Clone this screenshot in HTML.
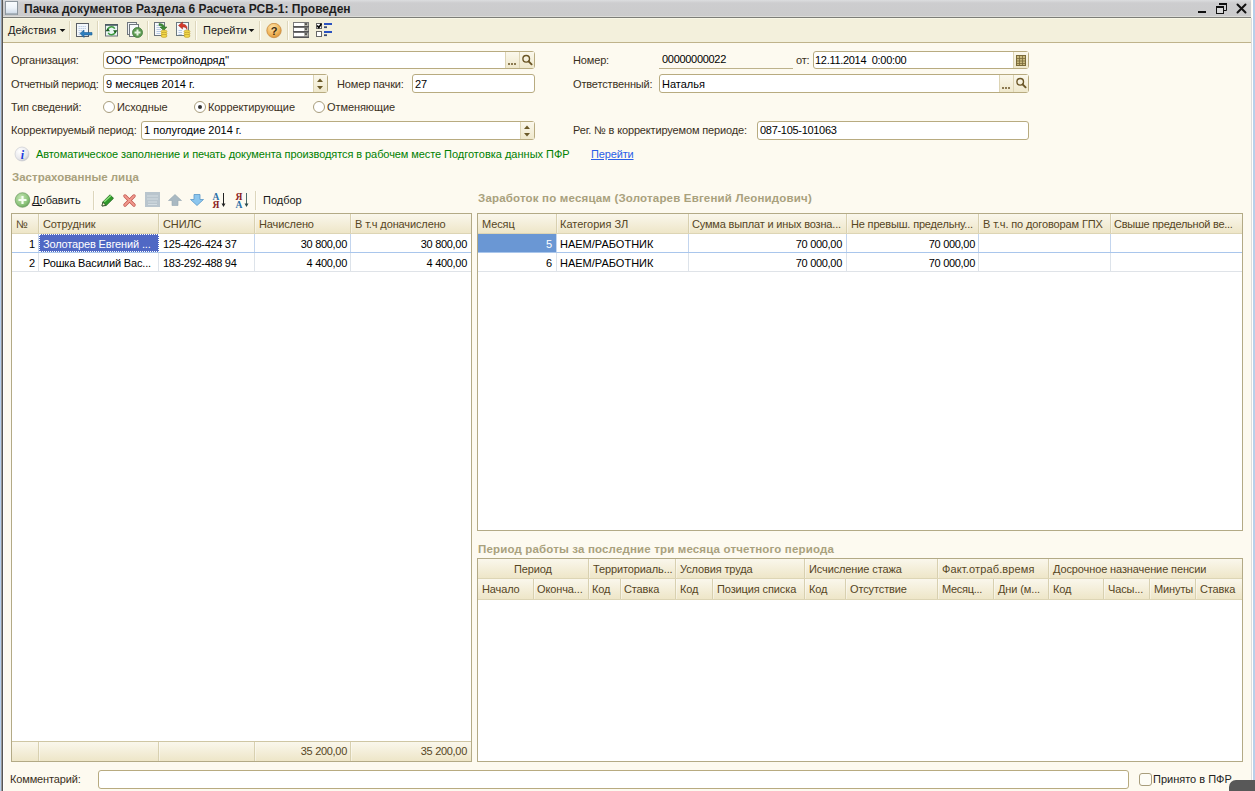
<!DOCTYPE html>
<html><head><meta charset="utf-8"><style>
*{box-sizing:border-box;margin:0;padding:0}
html,body{width:1255px;height:791px;overflow:hidden;background:#fdfaf0;font-family:"Liberation Sans",sans-serif;font-size:11px;color:#000}
.a{position:absolute}
.t{position:absolute;white-space:nowrap;line-height:13px}
.r{text-align:right}
.lbl{color:#3a301c;letter-spacing:-0.15px}
.inp{position:absolute;background:#fff;border:1px solid #b8ab80;border-radius:3px;overflow:hidden}
.sect{color:#a9a17d;font-weight:bold}
.hx{color:#56461f;letter-spacing:-0.12px}
.n{letter-spacing:-0.3px}
.hdr{position:absolute;background:linear-gradient(#faf7ec,#eee6c8)}
</style></head><body>
<div class="a" style="left:0px;top:0px;width:1px;height:791px;background:#b6d0ee"></div>
<div class="a" style="left:1px;top:0px;width:1px;height:791px;background:#9a9a9a"></div>
<div class="a" style="left:2px;top:0px;width:1px;height:791px;background:#555"></div>
<div class="a" style="left:3px;top:18px;width:1px;height:773px;background:#fff"></div>
<div class="a" style="left:1251px;top:18px;width:1px;height:773px;background:#dcdcdc"></div>
<div class="a" style="left:1252px;top:0px;width:1px;height:791px;background:#fff"></div>
<div class="a" style="left:1253px;top:0px;width:2px;height:791px;background:#b8d0ea"></div>
<div class="a" style="left:3px;top:0px;width:1248px;height:16px;background:linear-gradient(#dcdddf,#cdcdcf 3px,#cbcbcc)"></div>
<div class="a" style="left:3px;top:16px;width:1248px;height:1px;background:#dcdcd9"></div>
<div class="a" style="left:3px;top:17px;width:1248px;height:1px;background:#7c7d77"></div>
<div class="a" style="left:3px;top:18px;width:1248px;height:24px;background:#f3f0dc"></div>
<div class="a" style="left:3px;top:18px;width:1248px;height:1px;background:#f9f7e6"></div>
<div class="a" style="left:3px;top:42px;width:1248px;height:1px;background:#bfb38b"></div>
<div class="t " style="left:24px;top:3px;font-weight:bold;font-size:12px;letter-spacing:0;color:#1e1e1e">Пачка документов Раздела 6 Расчета РСВ-1: Проведен</div>
<div class="t " style="left:8px;top:24px;color:#1a1a1a">Действия</div>
<div class="t " style="left:203px;top:24px;color:#1a1a1a">Перейти</div>
<div class="t lbl" style="left:11px;top:54px;">Организация:</div>
<div class="t lbl" style="left:11px;top:78px;"><span style="letter-spacing:-0.35px">Отчетный период:</span></div>
<div class="t lbl" style="left:11px;top:101px;">Тип сведений:</div>
<div class="t lbl" style="left:11px;top:124px;">Корректируемый период:</div>
<div class="t lbl" style="left:337px;top:78px;">Номер пачки:</div>
<div class="t lbl" style="left:573px;top:54px;">Номер:</div>
<div class="t lbl" style="left:573px;top:78px;">Ответственный:</div>
<div class="t lbl" style="left:573px;top:124px;">Рег. № в корректируемом периоде:</div>
<div class="t lbl" style="left:796px;top:54px;">от:</div>
<div class="inp" style="left:103px;top:51px;width:432px;height:18px"></div>
<div class="inp" style="left:103px;top:74px;width:225px;height:19px"></div>
<div class="inp" style="left:412px;top:74px;width:123px;height:19px"></div>
<div class="inp" style="left:141px;top:121px;width:394px;height:19px"></div>
<div class="inp" style="left:813px;top:51px;width:216px;height:18px"></div>
<div class="inp" style="left:659px;top:74px;width:370px;height:19px"></div>
<div class="inp" style="left:757px;top:121px;width:272px;height:19px"></div>
<div class="a" style="left:659px;top:68px;width:134px;height:1px;background:#bdb28c"></div>
<div class="t " style="left:106px;top:54px;">ООО ''Ремстройподряд''</div>
<div class="t " style="left:106px;top:78px;">9 месяцев 2014 г.</div>
<div class="t " style="left:415px;top:78px;">27</div>
<div class="t " style="left:144px;top:124px;">1 полугодие 2014 г.</div>
<div class="t n" style="left:662px;top:53px;">00000000022</div>
<div class="t n" style="left:815px;top:54px;">12.11.2014&nbsp;&nbsp;0:00:00</div>
<div class="t " style="left:662px;top:78px;">Наталья</div>
<div class="t n" style="left:760px;top:124px;">087-105-101063</div>
<div class="a" style="left:103px;top:101px;width:12px;height:12px;border:1px solid #a89d7c;border-radius:50%;background:#fff"></div>
<div class="a" style="left:194px;top:101px;width:12px;height:12px;border:1px solid #a89d7c;border-radius:50%;background:#fff"></div>
<div class="a" style="left:313px;top:101px;width:12px;height:12px;border:1px solid #a89d7c;border-radius:50%;background:#fff"></div>
<div class="a" style="left:198px;top:105px;width:4px;height:4px;border-radius:50%;background:#333"></div>
<div class="t lbl" style="left:117px;top:101px;letter-spacing:-0.08px">Исходные</div>
<div class="t lbl" style="left:208px;top:101px;letter-spacing:-0.08px">Корректирующие</div>
<div class="t lbl" style="left:327px;top:101px;letter-spacing:-0.08px">Отменяющие</div>
<div class="t " style="left:36px;top:148px;color:#008000;letter-spacing:-0.08px">Автоматическое заполнение и печать документа производятся в рабочем месте</div>
<div class="t " style="left:444px;top:148px;color:#008000">Подготовка данных ПФР</div>
<div class="t " style="left:591px;top:148px;color:#2a5ee8;text-decoration:underline;letter-spacing:-0.15px">Перейти</div>
<div class="t sect" style="left:12px;top:171px;font-size:11.5px">Застрахованные лица</div>
<div class="t sect" style="left:478px;top:192px;font-size:11.5px;letter-spacing:0.18px">Заработок по месяцам (Золотарев Евгений Леонидович)</div>
<div class="t sect" style="left:478px;top:543px;font-size:11.5px;letter-spacing:0.16px">Период работы за последние три месяца отчетного периода</div>
<div class="t " style="left:32px;top:194px;color:#1a1a1a">Добавить</div>
<div class="t " style="left:263px;top:194px;color:#1a1a1a">Подбор</div>
<div class="a" style="left:11px;top:213px;width:461px;height:549px;background:#fff;border:1px solid #b3aa86"></div>
<div class="hdr" style="left:12px;top:214px;width:459px;height:19px"></div>
<div class="a" style="left:12px;top:233px;width:459px;height:1px;background:#ddd5b5"></div>
<div class="a" style="left:38px;top:214px;width:1px;height:19px;background:#d8d0b0"></div>
<div class="a" style="left:39px;top:214px;width:1px;height:19px;background:rgba(255,255,255,0.4)"></div>
<div class="a" style="left:158px;top:214px;width:1px;height:19px;background:#d8d0b0"></div>
<div class="a" style="left:159px;top:214px;width:1px;height:19px;background:rgba(255,255,255,0.4)"></div>
<div class="a" style="left:254px;top:214px;width:1px;height:19px;background:#d8d0b0"></div>
<div class="a" style="left:255px;top:214px;width:1px;height:19px;background:rgba(255,255,255,0.4)"></div>
<div class="a" style="left:350px;top:214px;width:1px;height:19px;background:#d8d0b0"></div>
<div class="a" style="left:351px;top:214px;width:1px;height:19px;background:rgba(255,255,255,0.4)"></div>
<div class="a" style="left:12px;top:252px;width:459px;height:1px;background:#a9c6ec"></div>
<div class="a" style="left:12px;top:271px;width:459px;height:1px;background:#dfe3e8"></div>
<div class="a" style="left:38px;top:234px;width:1px;height:18px;background:#c3d5ee"></div>
<div class="a" style="left:38px;top:253px;width:1px;height:18px;background:#dde3ea"></div>
<div class="a" style="left:158px;top:234px;width:1px;height:18px;background:#c3d5ee"></div>
<div class="a" style="left:158px;top:253px;width:1px;height:18px;background:#dde3ea"></div>
<div class="a" style="left:254px;top:234px;width:1px;height:18px;background:#c3d5ee"></div>
<div class="a" style="left:254px;top:253px;width:1px;height:18px;background:#dde3ea"></div>
<div class="a" style="left:350px;top:234px;width:1px;height:18px;background:#c3d5ee"></div>
<div class="a" style="left:350px;top:253px;width:1px;height:18px;background:#dde3ea"></div>
<div class="a" style="left:39px;top:234px;width:120px;height:18px;background:#5068c4;border:1px dotted #fff"></div>
<div class="hdr" style="left:12px;top:742px;width:459px;height:19px"></div>
<div class="a" style="left:12px;top:741px;width:459px;height:1px;background:#cfc6a4"></div>
<div class="a" style="left:38px;top:742px;width:1px;height:19px;background:#d8d0b0"></div>
<div class="a" style="left:39px;top:742px;width:1px;height:19px;background:rgba(255,255,255,0.4)"></div>
<div class="a" style="left:158px;top:742px;width:1px;height:19px;background:#d8d0b0"></div>
<div class="a" style="left:159px;top:742px;width:1px;height:19px;background:rgba(255,255,255,0.4)"></div>
<div class="a" style="left:254px;top:742px;width:1px;height:19px;background:#d8d0b0"></div>
<div class="a" style="left:255px;top:742px;width:1px;height:19px;background:rgba(255,255,255,0.4)"></div>
<div class="a" style="left:350px;top:742px;width:1px;height:19px;background:#d8d0b0"></div>
<div class="a" style="left:351px;top:742px;width:1px;height:19px;background:rgba(255,255,255,0.4)"></div>
<div class="t hx" style="left:16px;top:218px;">№</div>
<div class="t hx" style="left:43px;top:218px;">Сотрудник</div>
<div class="t hx" style="left:163px;top:218px;">СНИЛС</div>
<div class="t hx" style="left:259px;top:218px;">Начислено</div>
<div class="t hx" style="left:355px;top:218px;">В т.ч доначислено</div>
<div class="t " style="left:29px;top:238px;width:5px;text-align:right">1</div>
<div class="t " style="left:43px;top:238px;color:#fff;letter-spacing:-0.15px">Золотарев Евгений ...</div>
<div class="t " style="left:29px;top:257px;">2</div>
<div class="t " style="left:43px;top:257px;letter-spacing:-0.15px">Рошка Василий Вас...</div>
<div class="t n" style="left:163px;top:238px;">125-426-424 37</div>
<div class="t n" style="left:163px;top:257px;">183-292-488 94</div>
<div class="t r n" style="left:200px;top:238px;width:147px">30 800,00</div>
<div class="t r n" style="left:300px;top:238px;width:167px">30 800,00</div>
<div class="t r n" style="left:200px;top:257px;width:147px">4 400,00</div>
<div class="t r n" style="left:300px;top:257px;width:167px">4 400,00</div>
<div class="t r hx n" style="left:200px;top:745px;width:147px">35 200,00</div>
<div class="t r hx n" style="left:300px;top:745px;width:167px">35 200,00</div>
<div class="a" style="left:477px;top:213px;width:766px;height:318px;background:#fff;border:1px solid #b3aa86"></div>
<div class="hdr" style="left:478px;top:214px;width:764px;height:19px"></div>
<div class="a" style="left:478px;top:233px;width:764px;height:1px;background:#ddd5b5"></div>
<div class="a" style="left:556px;top:214px;width:1px;height:19px;background:#d8d0b0"></div>
<div class="a" style="left:557px;top:214px;width:1px;height:19px;background:rgba(255,255,255,0.4)"></div>
<div class="a" style="left:688px;top:214px;width:1px;height:19px;background:#d8d0b0"></div>
<div class="a" style="left:689px;top:214px;width:1px;height:19px;background:rgba(255,255,255,0.4)"></div>
<div class="a" style="left:846px;top:214px;width:1px;height:19px;background:#d8d0b0"></div>
<div class="a" style="left:847px;top:214px;width:1px;height:19px;background:rgba(255,255,255,0.4)"></div>
<div class="a" style="left:978px;top:214px;width:1px;height:19px;background:#d8d0b0"></div>
<div class="a" style="left:979px;top:214px;width:1px;height:19px;background:rgba(255,255,255,0.4)"></div>
<div class="a" style="left:1110px;top:214px;width:1px;height:19px;background:#d8d0b0"></div>
<div class="a" style="left:1111px;top:214px;width:1px;height:19px;background:rgba(255,255,255,0.4)"></div>
<div class="a" style="left:478px;top:252px;width:764px;height:1px;background:#a9c6ec"></div>
<div class="a" style="left:478px;top:271px;width:764px;height:1px;background:#dfe3e8"></div>
<div class="a" style="left:556px;top:234px;width:1px;height:18px;background:#c3d5ee"></div>
<div class="a" style="left:556px;top:253px;width:1px;height:18px;background:#dde3ea"></div>
<div class="a" style="left:688px;top:234px;width:1px;height:18px;background:#c3d5ee"></div>
<div class="a" style="left:688px;top:253px;width:1px;height:18px;background:#dde3ea"></div>
<div class="a" style="left:846px;top:234px;width:1px;height:18px;background:#c3d5ee"></div>
<div class="a" style="left:846px;top:253px;width:1px;height:18px;background:#dde3ea"></div>
<div class="a" style="left:978px;top:234px;width:1px;height:18px;background:#c3d5ee"></div>
<div class="a" style="left:978px;top:253px;width:1px;height:18px;background:#dde3ea"></div>
<div class="a" style="left:1110px;top:234px;width:1px;height:18px;background:#c3d5ee"></div>
<div class="a" style="left:1110px;top:253px;width:1px;height:18px;background:#dde3ea"></div>
<div class="a" style="left:478px;top:234px;width:78px;height:18px;background:#6a97d4"></div>
<div class="t hx" style="left:482px;top:218px;">Месяц</div>
<div class="t hx" style="left:560px;top:218px;"><span style="letter-spacing:0">Категория ЗЛ</span></div>
<div class="t hx" style="left:692px;top:218px;"><span style="letter-spacing:-0.17px">Сумма выплат и иных возна...</span></div>
<div class="t hx" style="left:851px;top:218px;"><span style="letter-spacing:-0.17px">Не превыш. предельну...</span></div>
<div class="t hx" style="left:983px;top:218px;">В т.ч. по договорам ГПХ</div>
<div class="t hx" style="left:1114px;top:218px;"><span style="letter-spacing:-0.26px">Свыше предельной ве...</span></div>
<div class="t r" style="left:480px;top:238px;width:72px;color:#fff">5</div>
<div class="t r" style="left:480px;top:257px;width:72px">6</div>
<div class="t " style="left:560px;top:238px;">НАЕМ/РАБОТНИК</div>
<div class="t " style="left:560px;top:257px;">НАЕМ/РАБОТНИК</div>
<div class="t r n" style="left:700px;top:238px;width:142px">70 000,00</div>
<div class="t r n" style="left:850px;top:238px;width:125px">70 000,00</div>
<div class="t r n" style="left:700px;top:257px;width:142px">70 000,00</div>
<div class="t r n" style="left:850px;top:257px;width:125px">70 000,00</div>
<div class="a" style="left:477px;top:558px;width:766px;height:204px;background:#fff;border:1px solid #b3aa86"></div>
<div class="hdr" style="left:478px;top:559px;width:764px;height:19px"></div>
<div class="a" style="left:478px;top:578px;width:764px;height:1px;background:#ddd5b5"></div>
<div class="hdr" style="left:478px;top:579px;width:764px;height:20px"></div>
<div class="a" style="left:478px;top:599px;width:764px;height:1px;background:#ddd5b5"></div>
<div class="a" style="left:588px;top:559px;width:1px;height:19px;background:#d8d0b0"></div>
<div class="a" style="left:589px;top:559px;width:1px;height:19px;background:rgba(255,255,255,0.4)"></div>
<div class="a" style="left:675px;top:559px;width:1px;height:19px;background:#d8d0b0"></div>
<div class="a" style="left:676px;top:559px;width:1px;height:19px;background:rgba(255,255,255,0.4)"></div>
<div class="a" style="left:804px;top:559px;width:1px;height:19px;background:#d8d0b0"></div>
<div class="a" style="left:805px;top:559px;width:1px;height:19px;background:rgba(255,255,255,0.4)"></div>
<div class="a" style="left:937px;top:559px;width:1px;height:19px;background:#d8d0b0"></div>
<div class="a" style="left:938px;top:559px;width:1px;height:19px;background:rgba(255,255,255,0.4)"></div>
<div class="a" style="left:1048px;top:559px;width:1px;height:19px;background:#d8d0b0"></div>
<div class="a" style="left:1049px;top:559px;width:1px;height:19px;background:rgba(255,255,255,0.4)"></div>
<div class="a" style="left:533px;top:579px;width:1px;height:20px;background:#d8d0b0"></div>
<div class="a" style="left:534px;top:579px;width:1px;height:20px;background:rgba(255,255,255,0.4)"></div>
<div class="a" style="left:588px;top:579px;width:1px;height:20px;background:#d8d0b0"></div>
<div class="a" style="left:589px;top:579px;width:1px;height:20px;background:rgba(255,255,255,0.4)"></div>
<div class="a" style="left:620px;top:579px;width:1px;height:20px;background:#d8d0b0"></div>
<div class="a" style="left:621px;top:579px;width:1px;height:20px;background:rgba(255,255,255,0.4)"></div>
<div class="a" style="left:675px;top:579px;width:1px;height:20px;background:#d8d0b0"></div>
<div class="a" style="left:676px;top:579px;width:1px;height:20px;background:rgba(255,255,255,0.4)"></div>
<div class="a" style="left:712px;top:579px;width:1px;height:20px;background:#d8d0b0"></div>
<div class="a" style="left:713px;top:579px;width:1px;height:20px;background:rgba(255,255,255,0.4)"></div>
<div class="a" style="left:804px;top:579px;width:1px;height:20px;background:#d8d0b0"></div>
<div class="a" style="left:805px;top:579px;width:1px;height:20px;background:rgba(255,255,255,0.4)"></div>
<div class="a" style="left:845px;top:579px;width:1px;height:20px;background:#d8d0b0"></div>
<div class="a" style="left:846px;top:579px;width:1px;height:20px;background:rgba(255,255,255,0.4)"></div>
<div class="a" style="left:937px;top:579px;width:1px;height:20px;background:#d8d0b0"></div>
<div class="a" style="left:938px;top:579px;width:1px;height:20px;background:rgba(255,255,255,0.4)"></div>
<div class="a" style="left:993px;top:579px;width:1px;height:20px;background:#d8d0b0"></div>
<div class="a" style="left:994px;top:579px;width:1px;height:20px;background:rgba(255,255,255,0.4)"></div>
<div class="a" style="left:1048px;top:579px;width:1px;height:20px;background:#d8d0b0"></div>
<div class="a" style="left:1049px;top:579px;width:1px;height:20px;background:rgba(255,255,255,0.4)"></div>
<div class="a" style="left:1103px;top:579px;width:1px;height:20px;background:#d8d0b0"></div>
<div class="a" style="left:1104px;top:579px;width:1px;height:20px;background:rgba(255,255,255,0.4)"></div>
<div class="a" style="left:1149px;top:579px;width:1px;height:20px;background:#d8d0b0"></div>
<div class="a" style="left:1150px;top:579px;width:1px;height:20px;background:rgba(255,255,255,0.4)"></div>
<div class="a" style="left:1195px;top:579px;width:1px;height:20px;background:#d8d0b0"></div>
<div class="a" style="left:1196px;top:579px;width:1px;height:20px;background:rgba(255,255,255,0.4)"></div>
<div class="t hx" style="left:478px;top:563px;width:110px;text-align:center">Период</div>
<div class="t hx" style="left:593px;top:563px;">Территориаль...</div>
<div class="t hx" style="left:680px;top:563px;">Условия труда</div>
<div class="t hx" style="left:809px;top:563px;">Исчисление стажа</div>
<div class="t hx" style="left:942px;top:563px;"><span style="letter-spacing:0.14px">Факт.отраб.время</span></div>
<div class="t hx" style="left:1053px;top:563px;">Досрочное назначение пенсии</div>
<div class="t hx" style="left:482px;top:583px;">Начало</div>
<div class="t hx" style="left:537px;top:583px;">Оконча...</div>
<div class="t hx" style="left:592px;top:583px;">Код</div>
<div class="t hx" style="left:624px;top:583px;">Ставка</div>
<div class="t hx" style="left:680px;top:583px;">Код</div>
<div class="t hx" style="left:717px;top:583px;">Позиция списка</div>
<div class="t hx" style="left:809px;top:583px;">Код</div>
<div class="t hx" style="left:850px;top:583px;">Отсутствие</div>
<div class="t hx" style="left:942px;top:583px;"><span style="letter-spacing:-0.3px">Месяц...</span></div>
<div class="t hx" style="left:998px;top:583px;">Дни (м...</div>
<div class="t hx" style="left:1053px;top:583px;">Код</div>
<div class="t hx" style="left:1108px;top:583px;">Часы...</div>
<div class="t hx" style="left:1154px;top:583px;">Минуты</div>
<div class="t hx" style="left:1200px;top:583px;">Ставка</div>
<svg class="a" style="left:5px;top:1px" width="13" height="14" viewBox="0 0 13 14"><defs><linearGradient id="tig" x1="0" y1="0" x2="0" y2="1"><stop offset="0" stop-color="#fbfdff"/><stop offset="0.5" stop-color="#eef3f9"/><stop offset="1" stop-color="#c9d6e4"/></linearGradient></defs><rect x="0.5" y="0.5" width="12" height="13" fill="url(#tig)" stroke="#8d969e"/><rect x="1" y="12" width="11" height="1.5" fill="#a9b3bc"/></svg>
<div class="a" style="left:1198px;top:11px;width:8px;height:2px;background:#111"></div>
<svg class="a" style="left:1216px;top:3px" width="11" height="11" viewBox="0 0 11 11"><path d="M3.5 2V0.5H10.5V7.5H8" fill="none" stroke="#111" stroke-width="1"/><rect x="3" y="0" width="8" height="2" fill="#111"/><rect x="0.5" y="3.5" width="7" height="7" fill="#d9d9d9" stroke="#111" stroke-width="1"/><rect x="0" y="3" width="8" height="2" fill="#111"/></svg>
<svg class="a" style="left:1236px;top:3px" width="11" height="11" viewBox="0 0 11 11"><path d="M1.5 1.5L9.5 9.5M9.5 1.5L1.5 9.5" stroke="#111" stroke-width="2" stroke-linecap="round"/></svg>
<div class="a" style="left:69px;top:21px;width:1px;height:19px;background:#ddd6bc"></div>
<div class="a" style="left:70px;top:21px;width:1px;height:19px;background:#fffdf6"></div>
<div class="a" style="left:97px;top:21px;width:1px;height:19px;background:#ddd6bc"></div>
<div class="a" style="left:98px;top:21px;width:1px;height:19px;background:#fffdf6"></div>
<div class="a" style="left:147px;top:21px;width:1px;height:19px;background:#ddd6bc"></div>
<div class="a" style="left:148px;top:21px;width:1px;height:19px;background:#fffdf6"></div>
<div class="a" style="left:195px;top:21px;width:1px;height:19px;background:#ddd6bc"></div>
<div class="a" style="left:196px;top:21px;width:1px;height:19px;background:#fffdf6"></div>
<div class="a" style="left:259px;top:21px;width:1px;height:19px;background:#ddd6bc"></div>
<div class="a" style="left:260px;top:21px;width:1px;height:19px;background:#fffdf6"></div>
<div class="a" style="left:287px;top:21px;width:1px;height:19px;background:#ddd6bc"></div>
<div class="a" style="left:288px;top:21px;width:1px;height:19px;background:#fffdf6"></div>
<svg class="a" style="left:59px;top:29px" width="7" height="3" viewBox="0 0 7 3"><path d="M0.6 0H6.4L3.5 3Z" fill="#111"/></svg>
<svg class="a" style="left:248px;top:29px" width="7" height="3" viewBox="0 0 7 3"><path d="M0.6 0H6.4L3.5 3Z" fill="#111"/></svg>
<svg class="a" style="left:75px;top:22px" width="18" height="16" viewBox="0 0 18 16"><rect x="1.5" y="1.5" width="12" height="13" fill="#f4f8fc" stroke="#5a5f66"/><path d="M3.5 4.5H11.5M3.5 6.5H11.5M3.5 8.5H9M3.5 10.5H6M3.5 12.5H5" stroke="#9db6d8" stroke-width="0.6" stroke-dasharray="1.5 0.5"/><path d="M5 11.5L9 8V10.5H17V13H9V15.5Z" fill="#2f7fbf" stroke="#1d5f96" stroke-width="0.6"/></svg>
<svg class="a" style="left:104px;top:23px" width="15" height="14" viewBox="0 0 15 14"><rect x="1.5" y="1.5" width="12" height="11.5" fill="#eaf6f4" stroke="#6a7176"/><rect x="1" y="1" width="13" height="1.8" fill="#4a5a62"/><path d="M3.6 7.5A3.9 3.9 0 0 1 10.8 5.6" stroke="#3d9a40" stroke-width="1.5" fill="none"/><path d="M11.4 8A3.9 3.9 0 0 1 4.2 9.9" stroke="#3d9a40" stroke-width="1.5" fill="none"/><path d="M1.4 8.2H6L3.7 5.2Z" fill="#1d5e20"/><path d="M13.6 7.3H9L11.3 10.3Z" fill="#1d5e20"/></svg>
<svg class="a" style="left:126px;top:21px" width="18" height="17" viewBox="0 0 18 17"><rect x="1.5" y="1.5" width="9" height="12" fill="#f0f3f6" stroke="#70777e"/><rect x="3.5" y="3.5" width="9" height="12" fill="#f7f9fb" stroke="#70777e"/><circle cx="11.5" cy="11.5" r="5" fill="#5c9a52" stroke="#3f7a3a" stroke-width="0.8"/><path d="M11.5 8.5V14.5M8.5 11.5H14.5" stroke="#e8f5e4" stroke-width="2"/></svg>
<svg class="a" style="left:153px;top:21px" width="17" height="17" viewBox="0 0 17 17"><rect x="1.5" y="1.5" width="10" height="13" fill="#f6f9fc" stroke="#6c747c"/><path d="M3.5 4.5H8M3.5 6.5H8M3.5 8.5H8M3.5 10.5H8M3.5 12.5H7" stroke="#9db6d8" stroke-width="0.7"/><path d="M6 2.5C9 2.5 11 3.5 11.5 6H14L10.5 9.5L7 6H9.2C8.8 4.8 7.8 4.5 6 4.5Z" fill="#3f8a35" stroke="#2a6a26" stroke-width="0.5"/><ellipse cx="11" cy="10.5" rx="3" ry="1.5" fill="#f2d84a" stroke="#b8982a" stroke-width="0.6"/><ellipse cx="11" cy="12.7" rx="3" ry="1.5" fill="#f2d84a" stroke="#b8982a" stroke-width="0.6"/><ellipse cx="11" cy="14.9" rx="3" ry="1.5" fill="#f2d84a" stroke="#b8982a" stroke-width="0.6"/></svg>
<svg class="a" style="left:175px;top:21px" width="17" height="17" viewBox="0 0 17 17"><rect x="1.5" y="1.5" width="12" height="13" fill="#f6f9fc" stroke="#6c7a80"/><path d="M3.5 9.5H7M3.5 11.5H7M3.5 13.5H7" stroke="#9db6d8" stroke-width="0.7"/><path d="M3.5 4.5L7.5 1V3.2C10.5 3.2 12.5 5 12 8.5C11.2 6.5 9.8 6 7.5 6V8Z" fill="#d43a2a" stroke="#9a2018" stroke-width="0.5"/><ellipse cx="12" cy="10.5" rx="3" ry="1.5" fill="#f2d84a" stroke="#b8982a" stroke-width="0.6"/><ellipse cx="12" cy="12.7" rx="3" ry="1.5" fill="#f2d84a" stroke="#b8982a" stroke-width="0.6"/><ellipse cx="12" cy="14.9" rx="3" ry="1.5" fill="#f2d84a" stroke="#b8982a" stroke-width="0.6"/></svg>
<svg class="a" style="left:266px;top:23px" width="16" height="16" viewBox="0 0 16 16"><defs><radialGradient id="hg" cx="0.4" cy="0.3" r="0.8"><stop offset="0" stop-color="#fde3a8"/><stop offset="0.6" stop-color="#f0b45a"/><stop offset="1" stop-color="#d38a2e"/></radialGradient></defs><circle cx="8" cy="7.5" r="7.2" fill="url(#hg)" stroke="#c78a40" stroke-width="0.8"/><text x="8" y="12" text-anchor="middle" font-family="Liberation Sans" font-weight="bold" font-size="11" fill="#3a2a12">?</text></svg>
<svg class="a" style="left:293px;top:22px" width="16" height="16" viewBox="0 0 16 16"><g fill="#fff" stroke="#7a7a7a"><rect x="0.5" y="0.5" width="15" height="4"/><rect x="0.5" y="5.5" width="15" height="4"/><rect x="0.5" y="10.5" width="15" height="4.5"/></g><g fill="#b8b8b0"><rect x="11" y="1" width="4" height="3"/><rect x="11" y="6" width="4" height="3"/><rect x="11" y="11" width="4" height="3.5"/></g><g fill="#111"><path d="M11.6 1.4H14.4L13 3.2Z"/><path d="M11.6 6.4H14.4L13 8.2Z"/><path d="M11.6 11.4H14.4L13 13.2Z"/></g><g fill="#555"><rect x="0" y="4" width="16" height="1.2"/><rect x="0" y="9" width="16" height="1.2"/><rect x="0" y="14.5" width="16" height="1.5"/></g></svg>
<svg class="a" style="left:316px;top:22px" width="17" height="16" viewBox="0 0 17 16"><rect x="0.5" y="1.5" width="5" height="5" fill="#fff" stroke="#666"/><path d="M1.2 3.6L2.8 5.6L5.4 1.6" stroke="#000" stroke-width="1.6" fill="none"/><rect x="0.5" y="9.5" width="5" height="5" fill="#fff" stroke="#666"/><g fill="#2a52c0"><rect x="8" y="1" width="8" height="2"/><rect x="8" y="9" width="8" height="2"/></g><g fill="#3a4a70"><rect x="8" y="4.3" width="3" height="1.8"/><rect x="8" y="12.3" width="3" height="1.8"/></g></svg>
<svg class="a" style="left:14px;top:146px" width="16" height="16" viewBox="0 0 16 16"><defs><radialGradient id="ig" cx="0.35" cy="0.3" r="0.8"><stop offset="0" stop-color="#ffffff"/><stop offset="0.7" stop-color="#e6e6ea"/><stop offset="1" stop-color="#b9bcc4"/></radialGradient></defs><circle cx="8" cy="8" r="7" fill="url(#ig)" stroke="#c4c6cc" stroke-width="0.6"/><text x="8.3" y="12.5" text-anchor="middle" font-family="Liberation Serif" font-style="italic" font-weight="bold" font-size="12" fill="#1a3ae0">i</text></svg>
<svg class="a" style="left:14px;top:192px" width="17" height="17" viewBox="0 0 17 17"><defs><radialGradient id="pg" cx="0.4" cy="0.35" r="0.75"><stop offset="0" stop-color="#c6e6b6"/><stop offset="0.65" stop-color="#8cc47a"/><stop offset="1" stop-color="#5e9a52"/></radialGradient></defs><circle cx="8.5" cy="8" r="7.3" fill="url(#pg)" stroke="#6e9a66" stroke-width="0.7"/><path d="M8.5 4V12M4.5 8H12.5" stroke="#f6fff2" stroke-width="2.2"/></svg>
<div class="a" style="left:33px;top:205px;width:9px;height:1px;background:#111"></div>
<div class="a" style="left:93px;top:191px;width:1px;height:19px;background:#ddd6bc"></div>
<div class="a" style="left:94px;top:191px;width:1px;height:19px;background:#fffdf6"></div>
<svg class="a" style="left:101px;top:194px" width="13" height="13" viewBox="0 0 13 13"><path d="M1 12L1.8 8L9 0.8L12.5 4.3L5.2 11.5Z" fill="#2f9a2a" stroke="#1c5e1a" stroke-width="0.8"/><path d="M3.2 7.8L10 1.5" stroke="#8fe07e" stroke-width="1.3"/><path d="M1 12L1.8 8.3L4.8 11.2Z" fill="#fffbd8" stroke="#1f3a1c" stroke-width="0.7"/></svg>
<svg class="a" style="left:123px;top:194px" width="13" height="13" viewBox="0 0 13 13"><path d="M2 2L11 11M11 2L2 11" stroke="#c0524a" stroke-width="3.2" stroke-linecap="round"/><path d="M2 2L11 11M11 2L2 11" stroke="#f19a8e" stroke-width="1.8" stroke-linecap="round"/></svg>
<svg class="a" style="left:145px;top:192px" width="15" height="15" viewBox="0 0 15 15"><rect x="0" y="0" width="15" height="15" fill="#b9c5cd"/><path d="M2 4H13M2 7H13M3 10H12M3 12.5H12" stroke="#d4dde2" stroke-width="1"/></svg>
<svg class="a" style="left:168px;top:194px" width="14" height="12" viewBox="0 0 14 12"><path d="M7 0.5L13.5 6.5H10V11.5H4V6.5H0.5Z" fill="#a9b9c2" stroke="#95a6b0" stroke-width="0.6"/></svg>
<svg class="a" style="left:190px;top:194px" width="14" height="12" viewBox="0 0 14 12"><path d="M7 11.5L13.5 5.5H10V0.5H4V5.5H0.5Z" fill="#8cc6ee" stroke="#5a98c8" stroke-width="0.8"/></svg>
<svg class="a" style="left:212px;top:192px" width="14" height="16" viewBox="0 0 14 16"><text x="0.5" y="8" font-family="Liberation Serif" font-weight="bold" font-size="9.5" fill="#2b6fa8">A</text><text x="0.5" y="15.5" font-family="Liberation Serif" font-weight="bold" font-size="9.5" fill="#8a2020">Я</text><path d="M11.5 1V14" stroke="#222" stroke-width="1"/><path d="M9.5 11.5L11.5 15L13.5 11.5Z" fill="#222"/></svg>
<svg class="a" style="left:235px;top:192px" width="14" height="16" viewBox="0 0 14 16"><text x="0.5" y="8" font-family="Liberation Serif" font-weight="bold" font-size="9.5" fill="#8a2020">Я</text><text x="0.5" y="15.5" font-family="Liberation Serif" font-weight="bold" font-size="9.5" fill="#2b6fa8">A</text><path d="M11.5 1V14" stroke="#4a6a6a" stroke-width="1"/><path d="M9.5 11.5L11.5 15L13.5 11.5Z" fill="#2a4a4a"/></svg>
<div class="a" style="left:255px;top:191px;width:1px;height:19px;background:#ddd6bc"></div>
<div class="a" style="left:256px;top:191px;width:1px;height:19px;background:#fffdf6"></div>
<div class="a" style="left:505px;top:52px;width:14px;height:16px;background:linear-gradient(#fbf8ec,#efe8cc);border-left:1px solid #ddd4b4"></div>
<div class="a" style="left:508px;top:63px;width:2px;height:2px;border-radius:1px;background:#6a5526"></div>
<div class="a" style="left:511px;top:63px;width:2px;height:2px;border-radius:1px;background:#6a5526"></div>
<div class="a" style="left:514px;top:63px;width:2px;height:2px;border-radius:1px;background:#6a5526"></div>
<div class="a" style="left:519px;top:52px;width:15px;height:16px;background:linear-gradient(#fbf8ec,#efe8cc);border-left:1px solid #ddd4b4"></div>
<svg class="a" style="left:521px;top:54px" width="12" height="12" viewBox="0 0 12 12"><circle cx="5.2" cy="4.8" r="3.3" fill="none" stroke="#6a5526" stroke-width="1.4"/><path d="M7.6 7.3L10.6 10.3" stroke="#6a5526" stroke-width="1.9" stroke-linecap="round"/></svg>
<div class="a" style="left:313px;top:75px;width:14px;height:17px;background:linear-gradient(#fbf8ec,#efe8cc);border-left:1px solid #ddd4b4"></div>
<svg class="a" style="left:316px;top:78px" width="8" height="12" viewBox="0 0 8 12"><path d="M4 0.5L7 4H1Z" fill="#6b5a2a"/><path d="M4 11.5L7 8H1Z" fill="#6b5a2a"/></svg>
<div class="a" style="left:520px;top:122px;width:14px;height:17px;background:linear-gradient(#fbf8ec,#efe8cc);border-left:1px solid #ddd4b4"></div>
<svg class="a" style="left:523px;top:125px" width="8" height="12" viewBox="0 0 8 12"><path d="M4 0.5L7 4H1Z" fill="#6b5a2a"/><path d="M4 11.5L7 8H1Z" fill="#6b5a2a"/></svg>
<div class="a" style="left:1013px;top:52px;width:15px;height:16px;background:linear-gradient(#fbf8ec,#efe8cc);border-left:1px solid #ddd4b4"></div>
<svg class="a" style="left:1016px;top:55px" width="10" height="12" viewBox="0 0 10 12"><rect x="0.5" y="0.5" width="9" height="10" fill="#c9b97e" stroke="#7a6a3a"/><path d="M0.5 3.5H9.5M0.5 6H9.5M0.5 8.5H9.5M3.5 0.5V10.5M6.5 0.5V10.5" stroke="#7a6a3a" stroke-width="0.8"/></svg>
<div class="a" style="left:999px;top:75px;width:14px;height:17px;background:linear-gradient(#fbf8ec,#efe8cc);border-left:1px solid #ddd4b4"></div>
<div class="a" style="left:1002px;top:87px;width:2px;height:2px;border-radius:1px;background:#6a5526"></div>
<div class="a" style="left:1005px;top:87px;width:2px;height:2px;border-radius:1px;background:#6a5526"></div>
<div class="a" style="left:1008px;top:87px;width:2px;height:2px;border-radius:1px;background:#6a5526"></div>
<div class="a" style="left:1013px;top:75px;width:15px;height:17px;background:linear-gradient(#fbf8ec,#efe8cc);border-left:1px solid #ddd4b4"></div>
<svg class="a" style="left:1015px;top:77px" width="12" height="12" viewBox="0 0 12 12"><circle cx="5.2" cy="4.8" r="3.3" fill="none" stroke="#6a5526" stroke-width="1.4"/><path d="M7.6 7.3L10.6 10.3" stroke="#6a5526" stroke-width="1.9" stroke-linecap="round"/></svg>
<div class="t lbl" style="left:10px;top:773px;">Комментарий:</div>
<div class="inp" style="left:98px;top:770px;width:1031px;height:19px"></div>
<div class="a" style="left:1139px;top:773px;width:13px;height:13px;border:1px solid #a89d7c;border-radius:3px;background:#fdfcf6"></div>
<div class="t " style="left:1153px;top:773px;color:#222">Принято в ПФР</div>
<div class="a" style="left:1229px;top:780px;width:30px;height:20px;border-radius:7px 0 0 0;background:#585858"></div>
</body></html>
